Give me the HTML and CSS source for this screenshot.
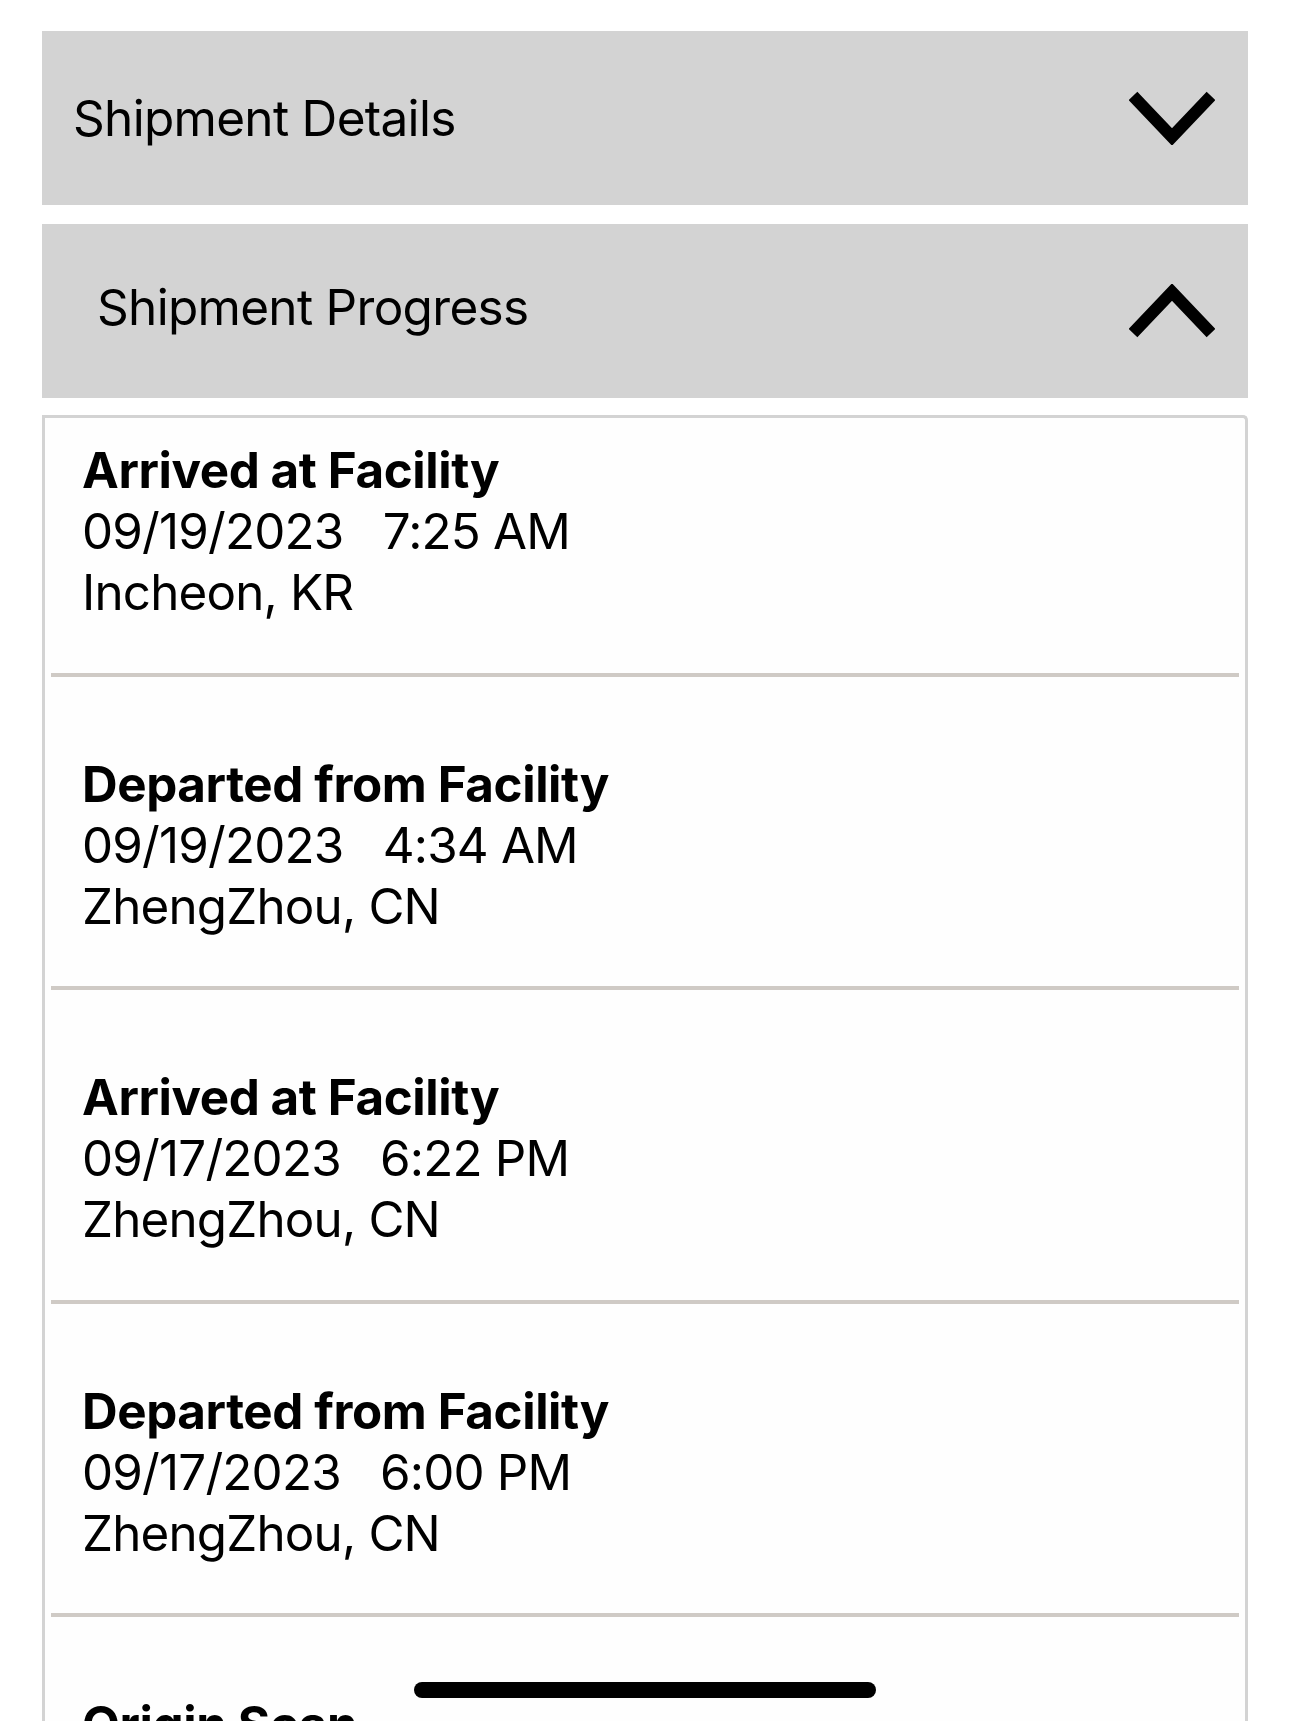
FILE: index.html
```html
<!DOCTYPE html>
<html lang="en">
<head>
<meta charset="utf-8">
<title>Shipment</title>
<link rel="stylesheet" href="styles.css">
</head>
<body>
<main class="page">
  <section class="panel">
    <h2 class="panel-title">Shipment Details</h2>
    <svg class="chevron" viewBox="0 0 86 54" aria-hidden="true"><polyline points="4,5 43,46 82,5" /></svg>
  </section>
  <section class="panel panel-progress">
    <h2 class="panel-title">Shipment Progress</h2>
    <svg class="chevron" viewBox="0 0 86 54" aria-hidden="true"><polyline points="4,49 43,8 82,49" /></svg>
  </section>
  <section class="events">
    <div class="event event-first">
      <div class="event-title">Arrived at Facility</div>
      <div class="event-line">09/19/2023&nbsp;&nbsp;&nbsp;7:25 AM</div>
      <div class="event-line">Incheon, KR</div>
    </div>
    <div class="sep"></div>
    <div class="event">
      <div class="event-title">Departed from Facility</div>
      <div class="event-line">09/19/2023&nbsp;&nbsp;&nbsp;4:34 AM</div>
      <div class="event-line">ZhengZhou, CN</div>
    </div>
    <div class="sep"></div>
    <div class="event">
      <div class="event-title">Arrived at Facility</div>
      <div class="event-line">09/17/2023&nbsp;&nbsp;&nbsp;6:22 PM</div>
      <div class="event-line">ZhengZhou, CN</div>
    </div>
    <div class="sep"></div>
    <div class="event">
      <div class="event-title">Departed from Facility</div>
      <div class="event-line">09/17/2023&nbsp;&nbsp;&nbsp;6:00 PM</div>
      <div class="event-line">ZhengZhou, CN</div>
    </div>
    <div class="sep"></div>
    <div class="event">
      <div class="event-title">Origin Scan</div>
      <div class="event-line">09/17/2023&nbsp;&nbsp;&nbsp;5:12 PM</div>
      <div class="event-line">ZhengZhou, CN</div>
    </div>
  </section>
</main>
<div class="home-indicator"></div>
</body>
</html>
```
FILE: styles.css
```css
html, body {
  margin: 0;
  padding: 0;
  background: #ffffff;
}
body {
  font-family: Inter, "Liberation Sans", sans-serif;
  color: #000;
  overflow: hidden;
  height: 1721px;
}
.page {
  padding: 31px 42px 0 42px;
  display: flex;
  flex-direction: column;
  gap: 19px;
}
.panel {
  height: 174px;
  background: #d3d3d3;
  display: flex;
  align-items: center;
  justify-content: space-between;
  padding: 0 33px 0 31px;
  box-sizing: border-box;
}
.panel-progress {
  padding-left: 55px;
}
.panel-progress .panel-title {
  padding-bottom: 9px;
}
.panel-title {
  margin: 0;
  font-size: 49.5px;
  font-weight: 400;
  letter-spacing: -0.7px;
}
.chevron {
  width: 86px;
  height: 54px;
  flex: none;
}
.chevron polyline {
  fill: none;
  stroke: #000;
  stroke-width: 12;
  stroke-linejoin: miter;
  stroke-linecap: butt;
}
.events {
  margin-top: -2px;
  border: 3px solid #d3d3d3;
  border-bottom: none;
  border-radius: 0 5px 0 0;
  background: #fefefe;
  padding: 0 6px;
}
.event {
  padding: 77px 0 49.5px 31px;
  font-size: 49.3px;
  line-height: 61px;
  letter-spacing: -0.8px;
}
.event-first {
  padding-top: 22px;
}
.event-title {
  font-weight: 700;
  letter-spacing: -0.4px;
}
.sep {
  height: 4px;
  background: #cfcac5;
}
.home-indicator {
  position: fixed;
  left: 50%;
  bottom: 23px;
  width: 462px;
  height: 16px;
  margin-left: -231px;
  border-radius: 8px;
  background: #000;
}
```
